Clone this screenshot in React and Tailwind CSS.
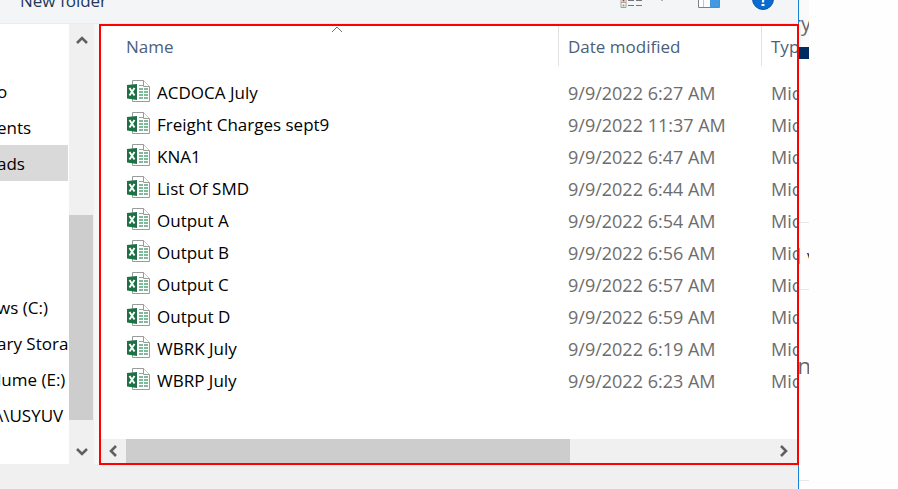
import React from "react";

const files = [
  ["ACDOCA July", "9/9/2022 6:27 AM"],
  ["Freight Charges sept9", "9/9/2022 11:37 AM"],
  ["KNA1", "9/9/2022 6:47 AM"],
  ["List Of SMD", "9/9/2022 6:44 AM"],
  ["Output A", "9/9/2022 6:54 AM"],
  ["Output B", "9/9/2022 6:56 AM"],
  ["Output C", "9/9/2022 6:57 AM"],
  ["Output D", "9/9/2022 6:59 AM"],
  ["WBRK July", "9/9/2022 6:19 AM"],
  ["WBRP July", "9/9/2022 6:23 AM"],
];

const places = ["", "o", "ents", "ads", "", "", "", "ws (C:)", "ary Stora", "lume (E:)", "\\\\USYUV"];

function ExcelIcon() {
  return (
    <svg className="mb-1 shrink-0" width="23" height="22" viewBox="0 0 23 22" aria-hidden="true">
      <path d="M5.500.500h11l6 6v15h-17z" fill="#fff" stroke="#9b9b9b" />
      <path d="M16.500.500v6h6" fill="#fff" stroke="#9b9b9b" />
      <path d="M12 5.500h4" stroke="#a5a5a5" />
      <path
        d="M12 8h4v2h-4zM17 8h4v2h-4zM12 11h4v2h-4zM17 11h4v2h-4zM12 14h4v2h-4zM17 14h4v2h-4zM12 17h4v2h-4zM17 17h4v2h-4z"
        fill="#7fbb98"
      />
      <path d="M0 5l10-1v16L0 18.500z" fill="#1e7145" />
      <path d="M2.500 8l5 7.500M7.500 8l-5 7.500" stroke="#fff" strokeWidth="1.900" fill="none" />
    </svg>
  );
}

function Arrow({ d, label, className }) {
  return (
    <button type="button" aria-label={label} className={`flex shrink-0 items-center justify-center ${className}`}>
      <svg width="12" height="12" viewBox="0 0 12 12" fill="none" stroke="#606060" strokeWidth="2.600" aria-hidden="true">
        <path d={d} />
      </svg>
    </button>
  );
}

function Toolbar() {
  return (
    <header className="flex h-6 shrink-0 items-end overflow-hidden border-b border-[#e9ecf0] bg-[#f4f5f7] pr-6 pl-5">
      <button type="button" className="mb-[10px] text-[17px] leading-6 text-[#1e395b]">
        New folder
      </button>
      <div className="mb-[13px] ml-auto flex items-end">
        <button type="button" aria-label="Change your view" className="mb-0.5 flex items-end gap-4">
          <svg width="22" height="20" viewBox="0 0 22 20" fill="none" aria-hidden="true">
            <path d="M1 9.500h5v5H1zM1 14.500h5v5H1z" fill="#fff" stroke="#a0a0a0" />
            <path d="M2.500 11.500h2v2h-2z" fill="#c0392b" />
            <path d="M2.500 16.500h2v2h-2z" fill="#7ba77b" />
            <path d="M8 12.500h6M16 12.500h6M8 17.500h6M16 17.500h6" stroke="#767676" />
          </svg>
          <svg className="mb-[7px]" width="8" height="5" viewBox="0 0 8 5" aria-hidden="true">
            <path d="M0 0h8L4 5z" fill="#42526b" />
          </svg>
        </button>
        <button type="button" aria-label="Show the preview pane" className="mb-0.5 ml-8">
          <svg className="block" width="22" height="20" viewBox="0 0 22 20" aria-hidden="true">
            <path d="M.500.500h21v19H.500z" fill="#fff" stroke="#808080" />
            <path d="M12 4h9v15h-9z" fill="#4299e1" />
            <path d="M5.500 1v18" stroke="#c5c5c5" />
          </svg>
        </button>
        <button type="button" aria-label="Get help" className="ml-8">
          <svg className="block" width="22" height="22" viewBox="0 0 22 22" aria-hidden="true">
            <circle cx="11" cy="11" r="10.500" fill="#0a6bd0" stroke="#0a55a5" />
            <path d="M8 7a3 3 0 1 1 4.500 3Q11 11 11 14.500" fill="none" stroke="#fff" strokeWidth="2.200" />
            <path d="M9.500 16h3v2h-3z" fill="#fff" />
          </svg>
        </button>
      </div>
    </header>
  );
}

function Sidebar() {
  return (
    <aside className="flex w-[99px] shrink-0 border-r-[5px] border-[#f7f7f7]">
      <nav aria-label="Folders" className="min-w-0 flex-1 overflow-hidden pr-px pt-[13px]">
        {places.map((place, i) => (
          <div
            key={i}
            className={`h-9 overflow-hidden text-[17px] leading-[38px] whitespace-nowrap ${
              place === "ads" ? "bg-[#d9d9d9]" : ""
            }`}
          >
            {place && (
              <a href="#folder" className="-ml-[3px] block">
                {place}
              </a>
            )}
          </div>
        ))}
      </nav>
      <div className="flex w-[25px] shrink-0 flex-col bg-[#f0f0f0]">
        <Arrow label="Scroll up" className="h-8" d="M1 9l5-5 5 5" />
        <div className="grow-[159]" />
        <div className="mr-px grow-[205] bg-[#cdcdcd]" />
        <div className="grow-[20]" />
        <Arrow label="Scroll down" className="h-6" d="M1 3l5 5 5-5" />
      </div>
    </aside>
  );
}

function FileList() {
  return (
    <main className="relative z-10 -mr-px -mb-px flex min-w-0 flex-1 flex-col border-2 border-[#fe0000] bg-white">
      <div className="relative min-h-0 flex-1 overflow-hidden">
        <svg className="absolute left-[230px] top-0" width="12" height="7" viewBox="0 0 12 7" aria-hidden="true">
          <path d="M1 6l5-5 5 5" fill="none" stroke="#707070" />
        </svg>
        <table className="w-full table-fixed border-separate border-spacing-0 text-left text-[17px] whitespace-nowrap">
          <colgroup>
            <col className="w-[458px]" />
            <col className="w-[203px]" />
            <col />
          </colgroup>
          <thead className="text-[#4c607a]">
            <tr className="h-10">
              <th scope="col" className="border-r border-[#e3e3e3] pt-0.5 pb-0 pl-[25px] font-normal">Name</th>
              <th scope="col" className="border-r border-[#e3e3e3] pt-0.5 pb-0 pl-[9px] font-normal">Date modified</th>
              <th scope="col" className="overflow-hidden pt-0.5 pb-0 pl-[9px] font-normal">Typ</th>
            </tr>
          </thead>
          <tbody className="text-[#6d6d6d]">
            <tr className="h-[10px]" aria-hidden="true">
              <td colSpan={3} className="p-0" />
            </tr>
            {files.map(([name, date]) => (
              <tr key={name} className="h-8">
                <td className="pt-0.5 pb-0 pl-[26px] text-black">
                  <span className="flex items-center gap-[7px]">
                    <ExcelIcon />
                    {name}
                  </span>
                </td>
                <td className="pt-0.5 pb-0 pl-[9px] text-lg leading-6">{date}</td>
                <td className="overflow-hidden pt-0.5 pb-0 pl-[9px] text-lg leading-6">Mic</td>
              </tr>
            ))}
          </tbody>
        </table>
      </div>
      <div className="flex h-6 shrink-0 bg-[#f0f0f0]">
        <Arrow label="Scroll left" className="w-[25px]" d="M8 1L3 6l5 5" />
        <div className="grow-[444] bg-[#cdcdcd]" />
        <div className="grow-[202]" />
        <Arrow label="Scroll right" className="w-[25px]" d="M2 1l5 5-5 5" />
      </div>
    </main>
  );
}

function PageBehind() {
  return (
    <div className="mr-[89px] flex w-[10px] shrink-0 flex-col overflow-hidden whitespace-nowrap text-[#666]">
      <div className="flex h-[47px] items-center justify-end bg-[#fafafa] text-xl">
        <span className="-mr-0.5">ry</span>
      </div>
      <div className="h-3 bg-[#002b60]" />
      <div className="h-[164px] border-b border-[#e8e8e8]" />
      <div className="flex h-[67px] items-center justify-between border-b border-[#e8e8e8] text-base text-[#222]">
        <span className="h-4 w-px bg-[#8cc4f0]" />
        <span className="-mr-1.5">v</span>
      </div>
      <div className="flex h-[191px] items-center justify-end border-b border-[#e8e8e8] pb-10 text-[22px]">
        <span className="-mr-0.5">n</span>
      </div>
    </div>
  );
}

export default function App() {
  return (
    <div className="flex h-screen overflow-hidden bg-[#fefefe] font-['Open_Sans','Noto_Sans',sans-serif] text-black">
      <div className="flex min-w-0 flex-1 flex-col border-r border-[#1883d7] bg-white">
        <Toolbar />
        <div className="flex min-h-0 flex-1">
          <Sidebar />
          <FileList />
        </div>
        <footer className="h-[25px] shrink-0 bg-[#f0f0f0]" />
      </div>
      <PageBehind />
    </div>
  );
}
